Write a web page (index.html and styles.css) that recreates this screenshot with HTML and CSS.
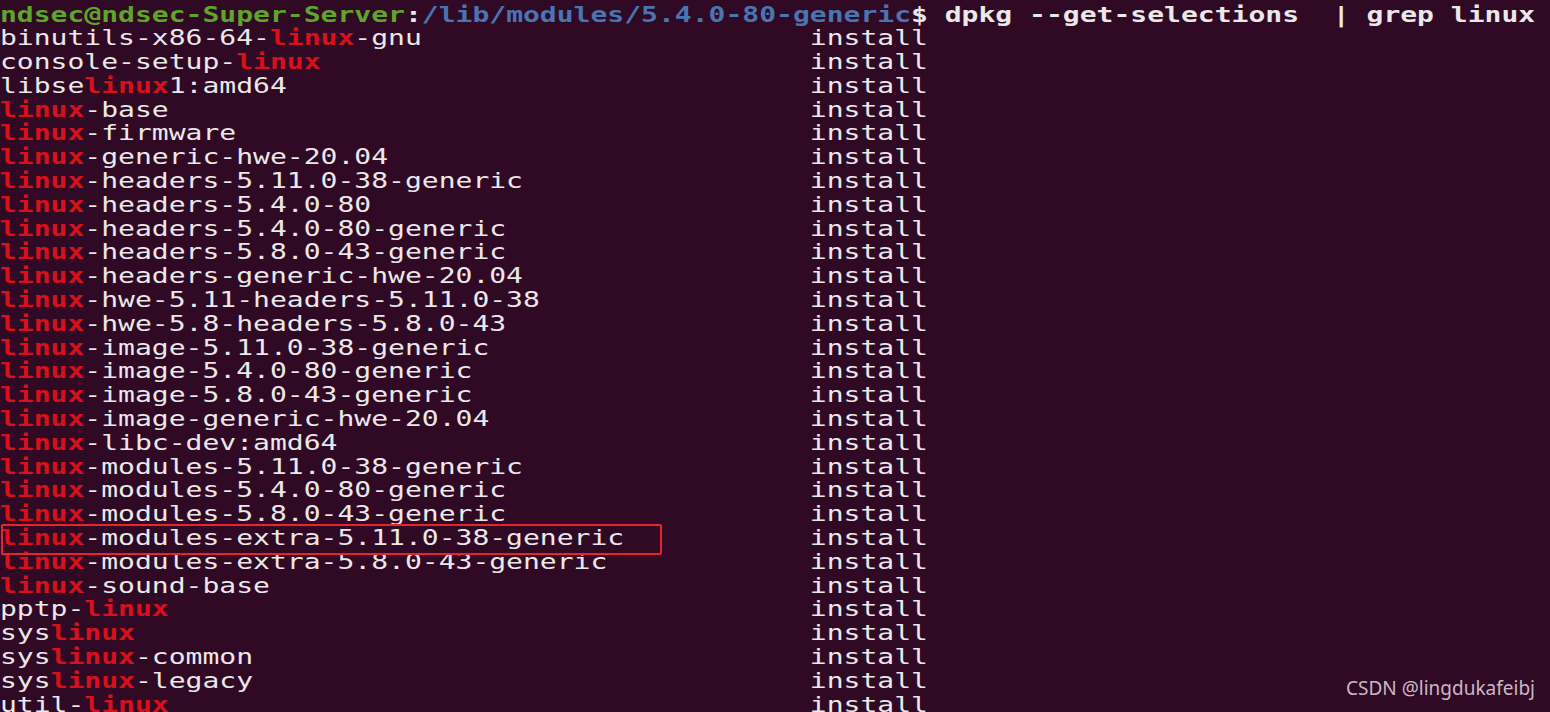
FILE: index.html
```html
<!DOCTYPE html>
<html>
<head>
<meta charset="utf-8">
<link rel="stylesheet" href="styles.css">
</head>
<body>
<div class="term">
  <div class="lines">
    <div class="prompt"><span class="user">ndsec@ndsec-Super-Server</span>:<span class="path">/lib/modules/5.4.0-80-generic</span>$ dpkg --get-selections  | grep linux</div>
    <div class="row"><span class="pkg">binutils-x86-64-<b>linux</b>-gnu</span><span>install</span></div>
    <div class="row"><span class="pkg">console-setup-<b>linux</b></span><span>install</span></div>
    <div class="row"><span class="pkg">libse<b>linux</b>1:amd64</span><span>install</span></div>
    <div class="row"><span class="pkg"><b>linux</b>-base</span><span>install</span></div>
    <div class="row"><span class="pkg"><b>linux</b>-firmware</span><span>install</span></div>
    <div class="row"><span class="pkg"><b>linux</b>-generic-hwe-20.04</span><span>install</span></div>
    <div class="row"><span class="pkg"><b>linux</b>-headers-5.11.0-38-generic</span><span>install</span></div>
    <div class="row"><span class="pkg"><b>linux</b>-headers-5.4.0-80</span><span>install</span></div>
    <div class="row"><span class="pkg"><b>linux</b>-headers-5.4.0-80-generic</span><span>install</span></div>
    <div class="row"><span class="pkg"><b>linux</b>-headers-5.8.0-43-generic</span><span>install</span></div>
    <div class="row"><span class="pkg"><b>linux</b>-headers-generic-hwe-20.04</span><span>install</span></div>
    <div class="row"><span class="pkg"><b>linux</b>-hwe-5.11-headers-5.11.0-38</span><span>install</span></div>
    <div class="row"><span class="pkg"><b>linux</b>-hwe-5.8-headers-5.8.0-43</span><span>install</span></div>
    <div class="row"><span class="pkg"><b>linux</b>-image-5.11.0-38-generic</span><span>install</span></div>
    <div class="row"><span class="pkg"><b>linux</b>-image-5.4.0-80-generic</span><span>install</span></div>
    <div class="row"><span class="pkg"><b>linux</b>-image-5.8.0-43-generic</span><span>install</span></div>
    <div class="row"><span class="pkg"><b>linux</b>-image-generic-hwe-20.04</span><span>install</span></div>
    <div class="row"><span class="pkg"><b>linux</b>-libc-dev:amd64</span><span>install</span></div>
    <div class="row"><span class="pkg"><b>linux</b>-modules-5.11.0-38-generic</span><span>install</span></div>
    <div class="row"><span class="pkg"><b>linux</b>-modules-5.4.0-80-generic</span><span>install</span></div>
    <div class="row"><span class="pkg"><b>linux</b>-modules-5.8.0-43-generic</span><span>install</span></div>
    <div class="row"><span class="pkg"><b>linux</b>-modules-extra-5.11.0-38-generic</span><span>install</span></div>
    <div class="row"><span class="pkg"><b>linux</b>-modules-extra-5.8.0-43-generic</span><span>install</span></div>
    <div class="row"><span class="pkg"><b>linux</b>-sound-base</span><span>install</span></div>
    <div class="row"><span class="pkg">pptp-<b>linux</b></span><span>install</span></div>
    <div class="row"><span class="pkg">sys<b>linux</b></span><span>install</span></div>
    <div class="row"><span class="pkg">sys<b>linux</b>-common</span><span>install</span></div>
    <div class="row"><span class="pkg">sys<b>linux</b>-legacy</span><span>install</span></div>
    <div class="row"><span class="pkg">util-<b>linux</b></span><span>install</span></div>
  </div>
  <div class="highlight"></div>
  <div class="watermark">CSDN @lingdukafeibj</div>
</div>
</body>
</html>
```

FILE: styles.css
```css
html, body {
  margin: 0;
  padding: 0;
  background: #300a24;
  overflow: hidden;
}

.term {
  position: relative;
  width: 1550px;
  height: 712px;
  overflow: hidden;
  background: #300a24;
}

.lines {
  font-family: "DejaVu Sans Mono", "Liberation Mono", monospace;
  font-size: 22px;
  line-height: 23.8px;
  color: #ebe8ea;
  transform: scaleX(1.2737);
  transform-origin: 0 0;
  padding-top: 2.5px;
}

.prompt {
  font-weight: bold;
  white-space: pre;
}

.user {
  color: #5ea52a;
}

.path {
  color: #4a74b2;
}

.row {
  display: flex;
  white-space: pre;
}

.pkg {
  width: 48ch;
  flex: none;
}

.row b {
  color: #d8101c;
  font-weight: bold;
}

.highlight {
  position: absolute;
  left: 1px;
  top: 524px;
  width: 657px;
  height: 27px;
  border: 2px solid #e8242a;
  border-radius: 2px;
}

.watermark {
  position: absolute;
  right: 15px;
  bottom: 11px;
  font-family: "Noto Sans", "Open Sans", sans-serif;
  font-size: 19px;
  color: #c9b9c5;
}
```
